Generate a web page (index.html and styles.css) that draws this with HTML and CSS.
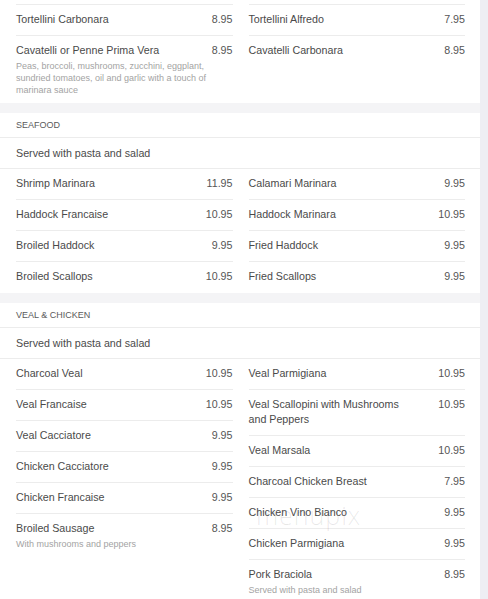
FILE: index.html
```html
<!DOCTYPE html>
<html>
<head>
<meta charset="utf-8">
<link rel="stylesheet" href="styles.css">
</head>
<body>
<div class="page">
  <section class="card card-first">
    <div class="items">
      <div class="col">
        <div class="item sep"><div class="row"><span class="name">Tortellini Carbonara</span><span class="price">8.95</span></div></div>
        <div class="item sep has-desc"><div class="row"><span class="name">Cavatelli or Penne Prima Vera</span><span class="price">8.95</span></div><p class="desc">Peas, broccoli, mushrooms, zucchini, eggplant, sundried tomatoes, oil and garlic with a touch of marinara sauce</p></div>
      </div>
      <div class="col">
        <div class="item sep"><div class="row"><span class="name">Tortellini Alfredo</span><span class="price">7.95</span></div></div>
        <div class="item sep"><div class="row"><span class="name">Cavatelli Carbonara</span><span class="price">8.95</span></div></div>
      </div>
    </div>
  </section>

  <section class="card">
    <h2 class="head">SEAFOOD</h2>
    <div class="note">Served with pasta and salad</div>
    <div class="items">
      <div class="col">
        <div class="item"><div class="row"><span class="name">Shrimp Marinara</span><span class="price">11.95</span></div></div>
        <div class="item"><div class="row"><span class="name">Haddock Francaise</span><span class="price">10.95</span></div></div>
        <div class="item"><div class="row"><span class="name">Broiled Haddock</span><span class="price">9.95</span></div></div>
        <div class="item"><div class="row"><span class="name">Broiled Scallops</span><span class="price">10.95</span></div></div>
      </div>
      <div class="col">
        <div class="item"><div class="row"><span class="name">Calamari Marinara</span><span class="price">9.95</span></div></div>
        <div class="item"><div class="row"><span class="name">Haddock Marinara</span><span class="price">10.95</span></div></div>
        <div class="item"><div class="row"><span class="name">Fried Haddock</span><span class="price">9.95</span></div></div>
        <div class="item"><div class="row"><span class="name">Fried Scallops</span><span class="price">9.95</span></div></div>
      </div>
    </div>
  </section>

  <section class="card">
    <h2 class="head">VEAL &amp; CHICKEN</h2>
    <div class="note">Served with pasta and salad</div>
    <div class="items">
      <div class="col">
        <div class="item"><div class="row"><span class="name">Charcoal Veal</span><span class="price">10.95</span></div></div>
        <div class="item"><div class="row"><span class="name">Veal Francaise</span><span class="price">10.95</span></div></div>
        <div class="item"><div class="row"><span class="name">Veal Cacciatore</span><span class="price">9.95</span></div></div>
        <div class="item"><div class="row"><span class="name">Chicken Cacciatore</span><span class="price">9.95</span></div></div>
        <div class="item"><div class="row"><span class="name">Chicken Francaise</span><span class="price">9.95</span></div></div>
        <div class="item has-desc"><div class="row"><span class="name">Broiled Sausage</span><span class="price">8.95</span></div><p class="desc">With mushrooms and peppers</p></div>
      </div>
      <div class="col">
        <div class="item"><div class="row"><span class="name">Veal Parmigiana</span><span class="price">10.95</span></div></div>
        <div class="item"><div class="row"><span class="name">Veal Scallopini with Mushrooms and Peppers</span><span class="price">10.95</span></div></div>
        <div class="item"><div class="row"><span class="name">Veal Marsala</span><span class="price">10.95</span></div></div>
        <div class="item"><div class="row"><span class="name">Charcoal Chicken Breast</span><span class="price">7.95</span></div></div>
        <div class="item"><div class="row"><span class="name">Chicken Vino Bianco</span><span class="price">9.95</span></div></div>
        <div class="item"><div class="row"><span class="name">Chicken Parmigiana</span><span class="price">9.95</span></div></div>
        <div class="item has-desc"><div class="row"><span class="name">Pork Braciola</span><span class="price">8.95</span></div><p class="desc">Served with pasta and salad</p></div>
      </div>
    </div>
  </section>
</div>
<div class="watermark">menupix</div>
</body>
</html>
```

FILE: styles.css
```css
html, body {
  margin: 0;
  padding: 0;
}
body {
  background: #eeeef3;
  font-family: "Liberation Sans", Arial, sans-serif;
  color: #4a4a4a;
  position: relative;
  height: 599px;
  overflow: hidden;
}
.page {
  width: 480px;
  background: #f4f4f6;
  display: flex;
  flex-direction: column;
  gap: 10px;
}
.card {
  background: #fff;
  padding-bottom: 1px;
}
.card-first {
  padding-top: 4px;
}
.head {
  margin: 0;
  height: 24px;
  line-height: 24px;
  padding-left: 16px;
  font-size: 9px;
  font-weight: normal;
  color: #5a5a5a;
  border-bottom: 1px solid #ececec;
}
.note {
  height: 30px;
  line-height: 30px;
  padding-left: 16px;
  font-size: 10.7px;
  color: #4a4a4a;
  border-bottom: 1px solid #ececec;
}
.items {
  display: grid;
  grid-template-columns: 1fr 1fr;
  column-gap: 16px;
  padding: 0 15px 0 16px;
  align-items: start;
}
.col {
  display: flex;
  flex-direction: column;
}
.item {
  padding: 7px 0 8px;
}
.item.has-desc {
  padding-bottom: 6px;
}
.item + .item,
.item.sep {
  border-top: 1px solid #ececec;
}
.row {
  display: flex;
  justify-content: space-between;
  font-size: 10.7px;
  line-height: 15px;
}
.name {
  flex: 0 0 75%;
}
.price {
  flex: 1;
  text-align: right;
  color: #555;
}
.desc {
  margin: 2px 0 0;
  font-size: 9px;
  line-height: 12px;
  color: #a3a3a3;
}
.watermark {
  position: absolute;
  left: 256px;
  top: 498px;
  font-family: "Open Sans", "Liberation Sans", sans-serif;
  font-size: 25px;
  font-weight: 300;
  letter-spacing: 1px;
  color: rgba(0, 0, 0, 0.09);
  pointer-events: none;
}
```
